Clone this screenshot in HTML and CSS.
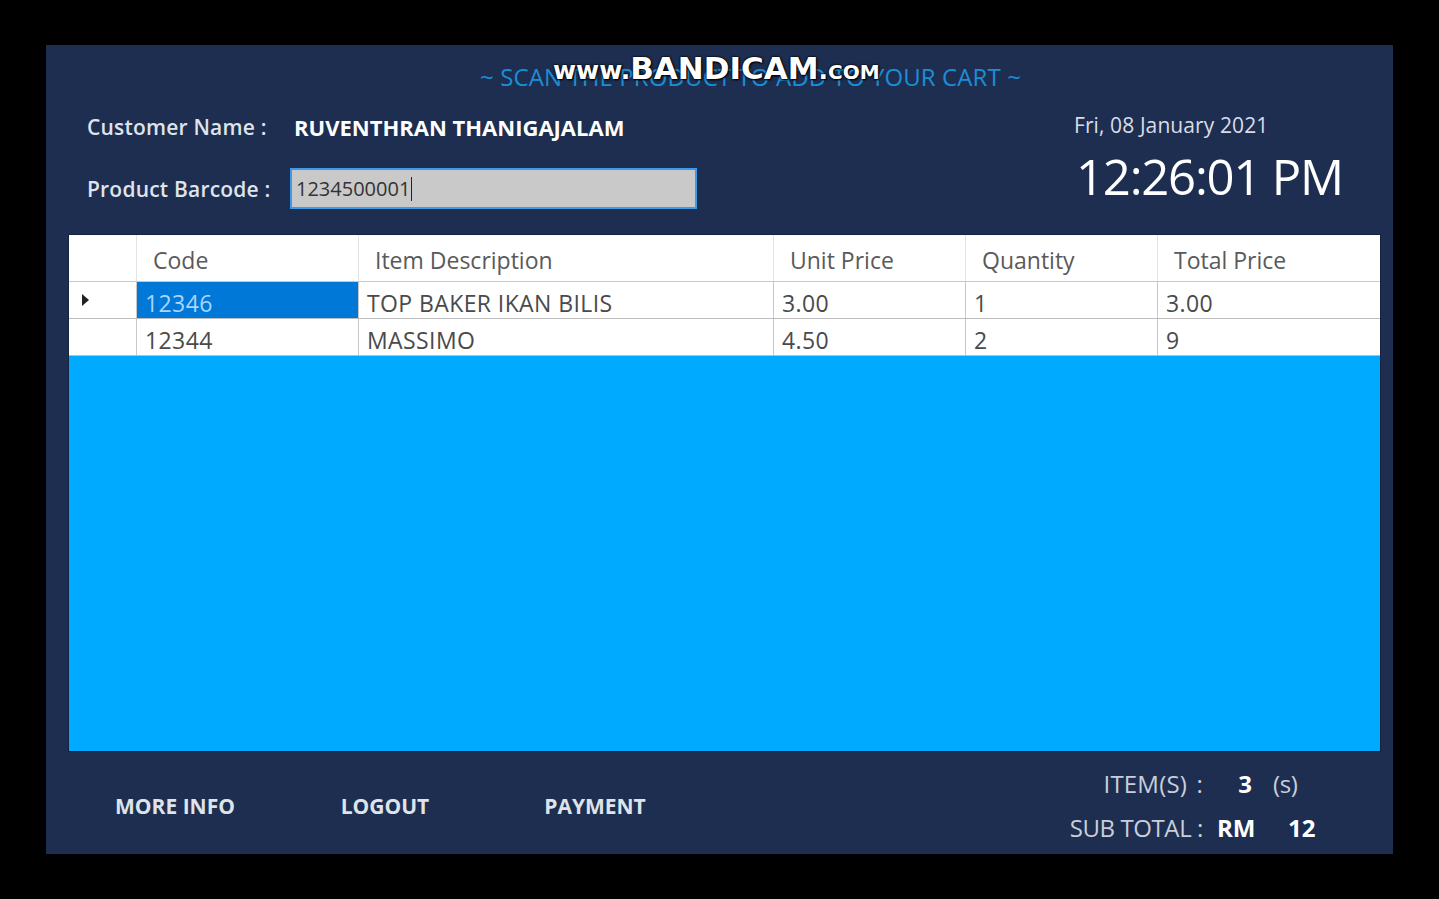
FILE: index.html
```html
<!DOCTYPE html>
<html>
<head>
<meta charset="utf-8">
<title>Cart</title>
<link rel="stylesheet" href="styles.css">
</head>
<body>
<div class="window">
  <div class="top">
    <div class="title">~ SCAN THE PRODUCT TO ADD TO YOUR CART ~</div>
    <div class="info">
      <div class="form">
        <div class="form-row">
          <span class="label">Customer Name :</span>
          <span class="name">RUVENTHRAN THANIGAJALAM</span>
        </div>
        <div class="form-row">
          <span class="label">Product Barcode :</span>
          <div class="input"><span class="input-text">1234500001</span><span class="caret"></span></div>
        </div>
      </div>
      <div class="clock">
        <div class="date">Fri, 08 January 2021</div>
        <div class="time">12:26:01 PM</div>
      </div>
    </div>
  </div>

  <div class="grid">
    <div class="grid-row head">
      <div class="cell rh"></div>
      <div class="cell c1">Code</div>
      <div class="cell c2">Item Description</div>
      <div class="cell c3">Unit Price</div>
      <div class="cell c4">Quantity</div>
      <div class="cell c5">Total Price</div>
    </div>
    <div class="grid-row">
      <div class="cell rh"><span class="arrow"></span></div>
      <div class="cell c1 selected">12346</div>
      <div class="cell c2">TOP BAKER IKAN BILIS</div>
      <div class="cell c3">3.00</div>
      <div class="cell c4">1</div>
      <div class="cell c5">3.00</div>
    </div>
    <div class="grid-row">
      <div class="cell rh"></div>
      <div class="cell c1">12344</div>
      <div class="cell c2">MASSIMO</div>
      <div class="cell c3">4.50</div>
      <div class="cell c4">2</div>
      <div class="cell c5">9</div>
    </div>
    <div class="grid-empty"></div>
  </div>

  <div class="bottom">
    <div class="buttons">
      <div class="btn">MORE INFO</div>
      <div class="btn">LOGOUT</div>
      <div class="btn">PAYMENT</div>
    </div>
    <div class="totals">
      <div class="tot-row">
        <span class="tot-label">ITEM(S) :</span>
        <span class="tot-val center">3</span>
        <span class="tot-unit">(s)</span>
      </div>
      <div class="tot-row">
        <span class="tot-label">SUB TOTAL :</span>
        <span class="tot-val">RM</span>
        <span class="tot-num">12</span>
      </div>
    </div>
  </div>

  <div class="watermark">www.<span class="wm-big">BANDICAM</span>.<span class="wm-small">COM</span></div>
</div>
</body>
</html>
```

FILE: styles.css
```css
html, body {
  margin: 0;
  padding: 0;
  background: #000;
  width: 1439px;
  height: 899px;
  overflow: hidden;
  font-family: "Open Sans", "Noto Sans", sans-serif;
}

.window {
  position: relative;
  margin: 45px 0 0 46px;
  width: 1347px;
  height: 809px;
  background: #1e2e50;
  display: flex;
  flex-direction: column;
}

.top {
  height: 189px;
  display: flex;
  flex-direction: column;
}

.title {
  height: 64px;
  line-height: 64px;
  text-align: center;
  padding-left: 62px;
  font-size: 24px;
  color: #1a8ed6;
  letter-spacing: 0.1px;
}

.info {
  display: flex;
}

.form {
  width: 987px;
  padding-left: 41px;
  display: flex;
  flex-direction: column;
  gap: 23px;
}

.form-row {
  display: flex;
  align-items: center;
  min-height: 36px;
}

.label {
  width: 203px;
  font-size: 21px;
  font-weight: 600;
  color: #dfe3ea;
  letter-spacing: 0.2px;
}

.name {
  padding-left: 4px;
  font-size: 22px;
  font-weight: 700;
  color: #ffffff;
  letter-spacing: 0;
}

.input {
  width: 399px;
  height: 37px;
  background: #c9c9c9;
  border: 2px solid #3d9ae8;
  display: flex;
  align-items: center;
  padding-left: 4px;
  box-sizing: content-box;
}

.input-text {
  font-size: 20px;
  color: #333;
  letter-spacing: 0;
}

.caret {
  width: 1px;
  height: 24px;
  background: #222;
  margin-left: 1px;
}

.clock {
  display: flex;
  flex-direction: column;
  padding-top: 3px;
}

.date {
  font-size: 21px;
  color: #d8dde6;
  letter-spacing: 0.1px;
  line-height: 26px;
}

.time {
  font-size: 49px;
  color: #ffffff;
  letter-spacing: -1.2px;
  line-height: 64px;
  margin-top: 6px;
  margin-left: 2px;
}

.grid {
  margin-left: 22px;
  width: 1313px;
  height: 518px;
  background: #00aaff;
  border: 1px solid #13223e;
  box-sizing: border-box;
  display: flex;
  flex-direction: column;
}

.grid-row {
  display: flex;
  height: 37px;
  background: #fff;
  border-bottom: 1px solid #bdbdbd;
  box-sizing: border-box;
}

.grid-row.head {
  height: 47px;
  border-bottom: 1px solid #c8c8c8;
}

.cell {
  border-right: 1px solid #c8c8c8;
  box-sizing: border-box;
  display: flex;
  align-items: center;
  padding: 5px 0 0 8px;
  font-size: 23px;
  color: #4a4a4a;
  letter-spacing: 0.4px;
  white-space: nowrap;
}

.head .cell {
  padding-left: 16px;
  padding-top: 3px;
  color: #5a5a5a;
  border-right-color: #e3e3e3;
  letter-spacing: 0;
}

.rh { width: 68px; padding: 0 0 0 13px; }
.c1 { width: 222px; }
.c2 { width: 415px; }
.c3 { width: 192px; }
.c4 { width: 192px; }
.c5 { flex: 1; border-right: none; }

.selected {
  background: #0078d7;
  color: #a8d6ff;
}

.arrow {
  width: 0;
  height: 0;
  border-top: 6px solid transparent;
  border-bottom: 6px solid transparent;
  border-left: 7px solid #222;
}

.grid-empty {
  flex: 1;
}

.bottom {
  flex: 1;
  display: flex;
  justify-content: space-between;
}

.buttons {
  display: flex;
  padding-left: 24px;
  padding-top: 6px;
  align-items: center;
}

.btn {
  width: 210px;
  text-align: center;
  font-size: 21px;
  font-weight: 700;
  color: #dfe3ea;
  letter-spacing: 0;
}

.totals {
  width: 358px;
  padding-top: 14px;
  display: flex;
  flex-direction: column;
  gap: 10px;
}

.tot-row {
  display: flex;
  align-items: center;
  height: 34px;
  font-size: 24px;
  color: #c9cfda;
  letter-spacing: -0.4px;
}

.tot-label {
  width: 168px;
  text-align: right;
}

.tot-row:first-child .tot-label {
  word-spacing: 3px;
  letter-spacing: 0.2px;
}

.tot-val {
  margin-left: 14px;
  width: 56px;
  font-weight: 700;
  color: #fff;
  letter-spacing: 0;
}

.tot-val.center {
  text-align: center;
}

.tot-num {
  margin-left: 15px;
  font-weight: 700;
  color: #fff;
  letter-spacing: 0;
}

.watermark {
  position: absolute;
  left: 507px;
  top: 5px;
  font-family: "DejaVu Sans", sans-serif;
  font-weight: 700;
  font-size: 25px;
  color: #fff;
  letter-spacing: 0;
  text-shadow: 0 0 2px #000, 0 0 2px #000, 1px 1px 2px #000;
}

.wm-big {
  font-size: 31px;
}

.wm-small {
  font-size: 20px;
}
```
